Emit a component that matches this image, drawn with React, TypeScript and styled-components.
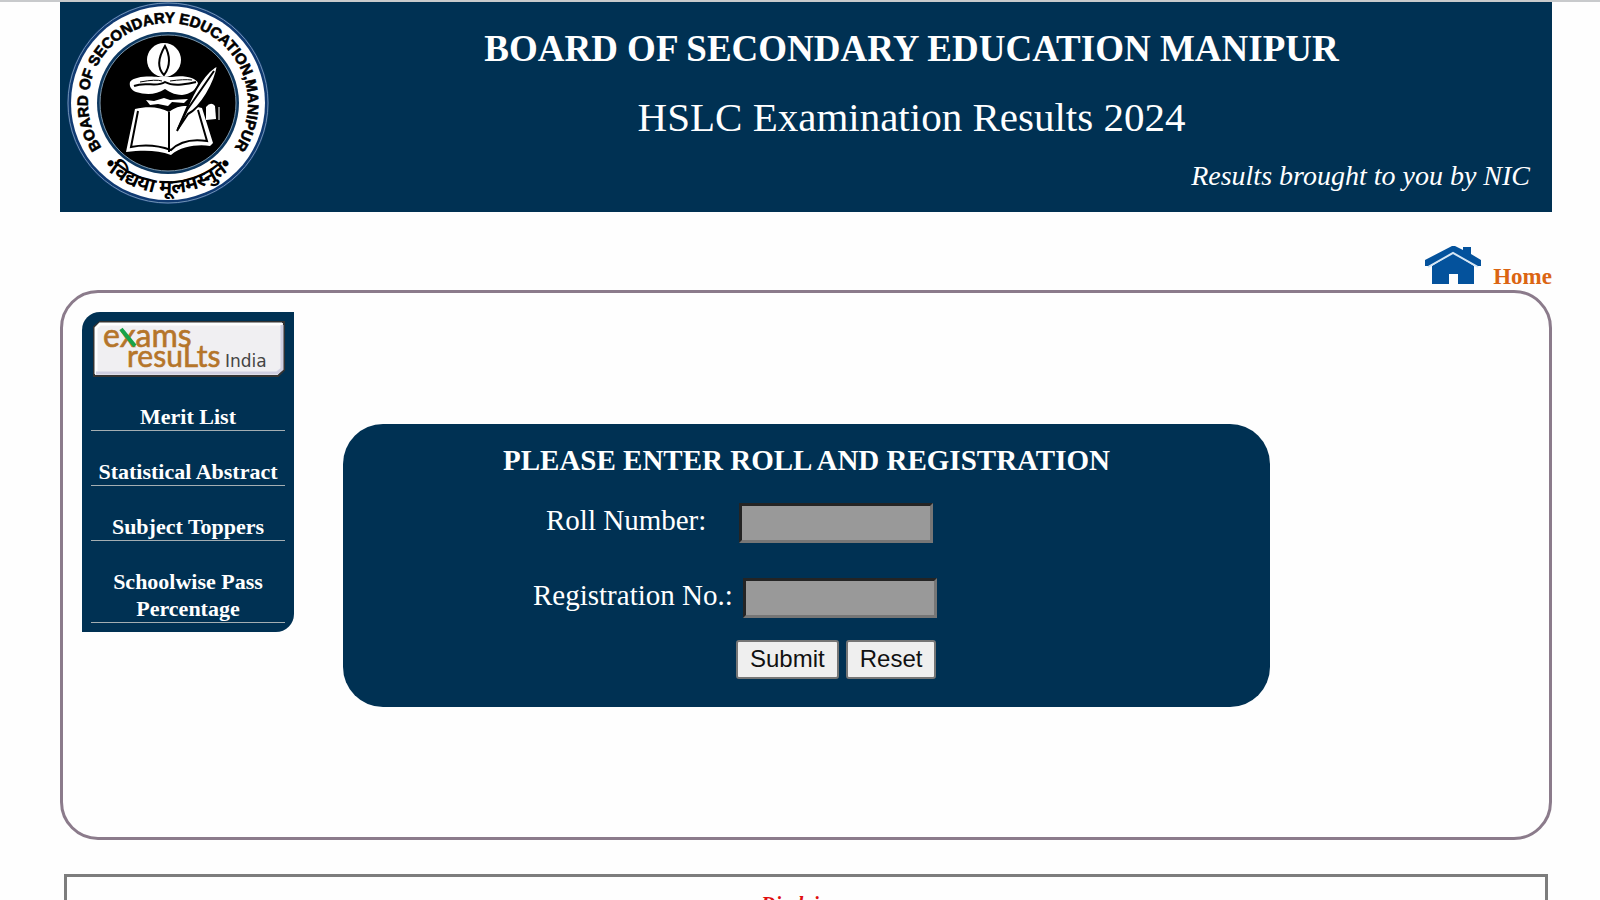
import React from "react";
import styled, { createGlobalStyle } from "styled-components";

const navy = "#003153";

const GlobalStyle = createGlobalStyle`
  *, *::before, *::after { box-sizing: border-box; }
  body {
    margin: 0;
    background: #fefefe;
    font-family: "Liberation Serif", "Times New Roman", serif;
    border-top: 2px solid #c8cacc;
    overflow: hidden;
    height: 100vh;
  }
`;

const Page = styled.div`
  margin: 0 48px 0 60px;
`;

const Header = styled.header`
  display: flex;
  height: 210px;
  background: ${navy};
  color: #fff;
`;

const Seal = styled.svg`
  flex: none;
  width: 206px;
  height: 202px;
  margin-left: 5px;
`;

const HeaderText = styled.div`
  flex: 1;
  text-align: center;
  padding: 25px 22px 0;
`;

const Title = styled.h1`
  margin: 0;
  font-size: 37px;
  line-height: 44px;
`;

const Subtitle = styled.p`
  margin: 22px 0 0;
  font-size: 41px;
  line-height: 48px;
`;

const Credit = styled.p`
  margin: 19px 0 0;
  font-size: 28px;
  line-height: 32px;
  font-style: italic;
  text-align: right;
`;

const HomeBar = styled.nav`
  display: flex;
  justify-content: flex-end;
  height: 78px;
  padding-top: 33px;
`;

const HomeLink = styled.a`
  display: flex;
  align-items: flex-end;
  gap: 12px;
  height: 41px;
  color: #db6512;
  font-size: 23px;
  line-height: 18px;
  font-weight: bold;
  text-decoration: none;

  svg {
    width: 56px;
    height: 40px;
    margin-bottom: 1px;
  }
`;

const Panel = styled.main`
  display: flex;
  align-items: flex-start;
  min-height: 550px;
  padding: 19px;
  border: 3px solid #8b7b8b;
  border-radius: 38px;
`;

const Sidebar = styled.nav`
  flex: none;
  width: 212px;
  padding: 9px;
  border-radius: 18px 0 18px 0;
  background: ${navy};
`;

const Banner = styled.svg`
  display: block;
  width: 192px;
  height: 56px;
  margin-left: 2px;
`;

const Menu = styled.ul`
  display: grid;
  gap: 27px;
  list-style: none;
  margin: 0;
  padding: 26px 0 0;
`;

const MenuItem = styled.li`
  border-bottom: 1px solid #a4aeb2;
  text-align: center;
  font-size: 22px;
  line-height: 27px;
  font-weight: bold;

  a {
    color: #fff;
    text-decoration: none;
  }
`;

const FormCard = styled.form`
  flex: 1;
  margin: 112px 260px 0 49px;
  padding: 19px 0 28px;
  border-radius: 40px;
  background: ${navy};
  color: #fff;
  font-size: 29px;
`;

const FormTitle = styled.h2`
  margin: 0;
  text-align: center;
  font-size: 29px;
  line-height: 34px;
`;

const Field = styled.div<{ $gap: number; $indent: number; $top: number }>`
  display: flex;
  gap: ${(p) => p.$gap}px;
  margin-top: ${(p) => p.$top}px;
  padding-left: ${(p) => p.$indent}px;

  label {
    line-height: 34px;
  }
`;

const TextBox = styled.input`
  width: 194px;
  height: 40px;
  border: 3px solid;
  border-color: #242424 #767676 #767676 #242424;
  border-radius: 0;
  background: #999;
  font: 24px "Liberation Sans", Arial, sans-serif;
`;

const Buttons = styled.div`
  display: flex;
  gap: 7px;
  margin-top: 22px;
  padding-left: 393px;
`;

const Button = styled.button`
  height: 39px;
  padding: 0 12px 2px;
  border: 2px solid #767676;
  border-radius: 3px;
  background: #efefef;
  color: #111;
  font: 24px "Liberation Sans", Arial, sans-serif;
`;

const Disclaimer = styled.footer`
  margin: 34px 4px 0;
  padding: 14px 0 20px;
  border: 3px solid #7d7d7d;
  text-align: center;
`;

const DisclaimerTitle = styled.h3`
  margin: 0;
  color: #e01010;
  font-size: 20px;
  line-height: 26px;
  font-style: italic;
`;

const items = ["Merit List", "Statistical Abstract", "Subject Toppers", "Schoolwise Pass Percentage"];

export default function App() {
  return (
    <>
      <GlobalStyle />
      <Page>
        <Header>
          <Seal viewBox="0 0 204 202" role="img" aria-label="Board seal">
            <defs>
              <path id="ring" d="M35.7 145.7 A80 80 0 1 1 168.3 145.7" />
              <path id="motto" d="M38 165 A90.5 90.5 0 0 0 166 165" />
            </defs>
            <circle cx="102" cy="101" r="101" fill="#103a72" />
            <circle cx="102" cy="101" r="100" fill="none" stroke="#6f93b3" strokeWidth="1" />
            <circle cx="102" cy="101" r="97" fill="#fff" />
            <circle cx="102" cy="101" r="71" fill="#0d3860" />
            <circle cx="102" cy="101" r="68" fill="#000" stroke="#7d97ab" strokeWidth="1" />
            <text fill="#000" stroke="#000" strokeWidth="0.6" fontFamily='"Liberation Sans", sans-serif' fontWeight="bold" fontSize="15">
              <textPath href="#ring" startOffset="50%" textAnchor="middle">BOARD OF SECONDARY EDUCATION,MANIPUR</textPath>
            </text>
            <text fill="#000" fontFamily='"Noto Sans", sans-serif' fontWeight="bold" fontSize="20">
              <textPath href="#motto" startOffset="50%" textAnchor="middle">•विद्यया मूलमस्नुते•</textPath>
            </text>
            <g fill="#fff">
              <circle cx="98" cy="58" r="17" />
              <path d="M64 80C68 74 84 74 92 75H106C118 73 130 76 132 81C131 88 124 92 116 93C108 93 102 89 99 87C90 93 80 93 70 90C65 88 63 84 64 80Z" />
              <path d="M80 98L88 99L98 96L104 98L122 97L118 101L106 100L102 104L92 102L84 103Z" />
              <path d="M69 107C82 104 94 105 103 110C112 103 121 103 136 106L147 141L144 144C133 142 115 144 105 153C92 148 77 148 60 150Z" />
              <path d="M140 105Q145 99 149 104L150 117L140 118Z" />
            </g>
            <g fill="none" stroke="#000" strokeWidth="2">
              <path d="M99 44C92 56 91 66 98 73C105 64 104 53 99 44Z" />
              <path d="M68 84C80 79 90 86 99 80C108 85 120 82 130 80" />
              <path d="M74 80Q90 77 96 79M104 79Q118 77 126 78" strokeWidth="1" />
              <path d="M103 110V150M72 109L65 145C80 142 94 144 105 148C114 139 128 137 141 139L132 108" />
            </g>
            <path d="M152 63C140 68 127 90 121 106L112 127L122 112C135 105 149 82 152 63Z" fill="#fff" stroke="#000" strokeWidth="2" />
            <path d="M148 69L121 108L111 129" fill="none" stroke="#000" strokeWidth="2" />
            <path d="M153 105V118" stroke="#fff" strokeWidth="1" />
          </Seal>
          <HeaderText>
            <Title>BOARD OF SECONDARY EDUCATION MANIPUR</Title>
            <Subtitle>HSLC Examination Results 2024</Subtitle>
            <Credit>Results brought to you by NIC</Credit>
          </HeaderText>
        </Header>
        <HomeBar>
          <HomeLink href="#home">
            <svg viewBox="0 0 56 40" aria-hidden="true">
              <path d="M7 21L28 8L49 21V39H33V29H24V39H7Z" fill="#04529c" />
              <path d="M0 15L27 1H30L38 5V2H46V9L56 15V21H52L28 8L4 21H0Z" fill="#04529c" />
              <path d="M3 22L28 8L53 22" fill="none" stroke="#d5e6f5" strokeWidth="2" />
            </svg>
            Home
          </HomeLink>
        </HomeBar>
        <Panel>
          <Sidebar>
            <Banner viewBox="0 0 192 56" role="img" aria-label="Exams results India">
              <path d="M7 1H191V49L185 55H1V6Z" fill="#f0eff2" stroke="#333" strokeWidth="2" />
              <path d="M3 53V7L7 3H189" fill="none" stroke="#fff" strokeWidth="3" />
              <path d="M3 52H184L189 48V4" fill="none" stroke="#cfcfe2" strokeWidth="3" />
              <g fill="#b5752a" stroke="#b5752a" strokeWidth="0.6" fontFamily='Lato, "Open Sans", sans-serif'>
                <text x="10" y="26" fontSize="32">exams</text>
                <text x="34" y="46" fontSize="30">resuLts</text>
              </g>
              <path d="M28 8L42 25" stroke="#16a34a" strokeWidth="4" />
              <text x="132" y="46" fill="#444" fontFamily='"DejaVu Sans", sans-serif' fontSize="17">India</text>
            </Banner>
            <Menu>
              {items.map((label) => (
                <MenuItem key={label}>
                  <a href="#list">{label}</a>
                </MenuItem>
              ))}
            </Menu>
          </Sidebar>
          <FormCard onSubmit={(e) => e.preventDefault()}>
            <FormTitle>PLEASE ENTER ROLL AND REGISTRATION</FormTitle>
            <Field $indent={203} $gap={33} $top={26}>
              <label htmlFor="roll">Roll Number:</label>
              <TextBox id="roll" />
            </Field>
            <Field $indent={190} $gap={10} $top={35}>
              <label htmlFor="reg">Registration No.:</label>
              <TextBox id="reg" />
            </Field>
            <Buttons>
              <Button type="submit">Submit</Button>
              <Button type="reset">Reset</Button>
            </Buttons>
          </FormCard>
        </Panel>
        <Disclaimer>
          <DisclaimerTitle>Disclaimer</DisclaimerTitle>
        </Disclaimer>
      </Page>
    </>
  );
}
